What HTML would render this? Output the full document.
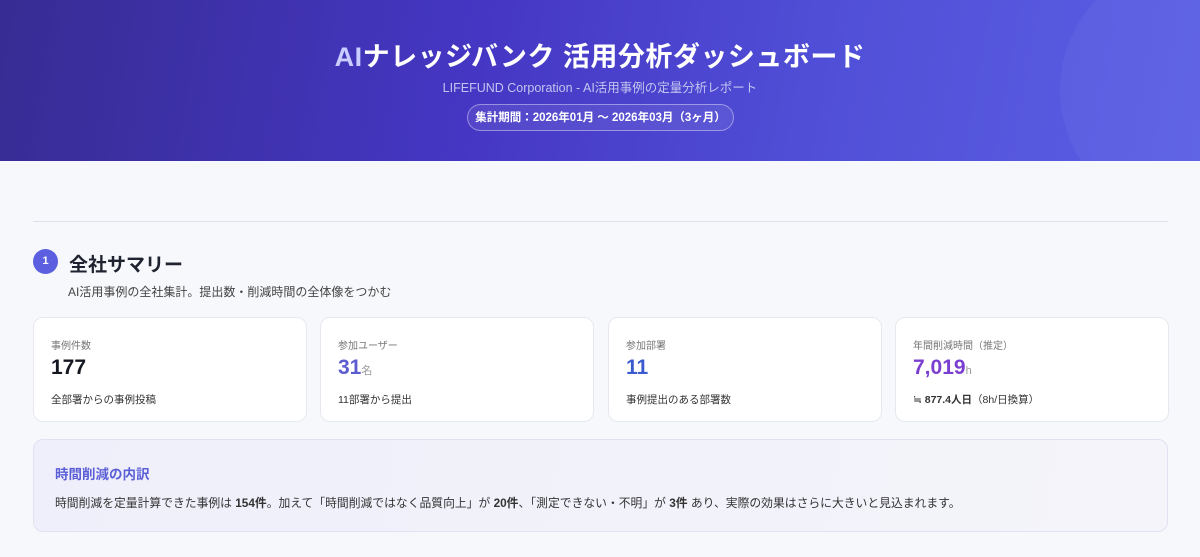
<!DOCTYPE html>
<html><head><meta charset="utf-8"><style>
*{margin:0;padding:0;box-sizing:border-box}
body{width:1200px;height:557px;overflow:hidden;background:#f7f8fb;font-family:"Liberation Sans","Noto Sans CJK JP",sans-serif;color:#1f2330;position:relative}
.hd{position:absolute;left:0;top:0;width:1200px;height:161px;background:linear-gradient(100deg,#372c93 0%,#4537c4 40%,#5150d8 70%,#5a5fe4 100%);overflow:hidden;text-align:center;color:#fff}
.hd .c{position:absolute;right:-120px;top:-40px;width:260px;height:260px;border-radius:50%;background:rgba(255,255,255,0.04)}
.hd h1{position:absolute;top:35px;left:0;right:0;font-size:27px;font-weight:bold;letter-spacing:0.5px}
.hd h1 span{color:#c9cdff}
.hd .s{position:absolute;top:77px;left:0;right:0;font-size:12.5px;color:#c3c5f0}
.hd .p{position:absolute;top:104px;left:467px;width:267px;height:27px;border:1px solid rgba(255,255,255,0.4);border-radius:14px;background:rgba(255,255,255,0.08);font-size:11.5px;font-weight:bold;line-height:27px}
.hr{position:absolute;left:33px;top:221px;width:1135px;height:1px;background:#dfe1e8}
.num{position:absolute;left:33px;top:249px;width:25px;height:25px;border-radius:50%;background:#5b5fe0;color:#fff;font-size:11px;font-weight:bold;text-align:center;line-height:25px}
.tt{position:absolute;left:69px;top:250px;font-size:19px;font-weight:bold}
.sub{position:absolute;left:68px;top:283px;font-size:12px;color:#444}
.card{position:absolute;top:317px;height:105px;width:274px;background:#fff;border:1px solid #e6e8ef;border-radius:10px;padding:0 17px}
.card .l{position:absolute;top:19px;font-size:10px;color:#777}
.card .v{position:absolute;top:38px;font-size:21px;font-weight:bold}
.card .v small{font-size:11px;color:#999;font-weight:normal}
.card .d{position:absolute;top:74px;font-size:10.5px;color:#333}
.box{position:absolute;left:33px;top:439px;width:1135px;height:93px;border:1px solid #e0e1f3;border-radius:10px;background:linear-gradient(100deg,#efeffb,#f4f4fa)}
.box h3{position:absolute;left:21px;top:23px;font-size:13.5px;color:#5b5fd6;font-weight:bold}
.box p{position:absolute;left:21px;top:54px;font-size:11.8px;color:#333}
</style></head><body>
<div class="hd"><div class="c"></div>
<h1><span>AI</span>ナレッジバンク 活用分析ダッシュボード</h1>
<div class="s">LIFEFUND Corporation - AI活用事例の定量分析レポート</div>
<div class="p">集計期間：2026年01月 〜 2026年03月（3ヶ月）</div>
</div>
<div class="hr"></div>
<div class="num">1</div>
<div class="tt">全社サマリー</div>
<div class="sub">AI活用事例の全社集計。提出数・削減時間の全体像をつかむ</div>
<div class="card" style="left:33px"><div class="l">事例件数</div><div class="v" style="color:#14171f">177</div><div class="d">全部署からの事例投稿</div></div>
<div class="card" style="left:320px"><div class="l">参加ユーザー</div><div class="v" style="color:#5a5ccf">31<small>名</small></div><div class="d">11部署から提出</div></div>
<div class="card" style="left:608px"><div class="l">参加部署</div><div class="v" style="color:#3a5bd0">11</div><div class="d">事例提出のある部署数</div></div>
<div class="card" style="left:895px"><div class="l">年間削減時間（推定）</div><div class="v" style="color:#7a3fd0">7,019<small>h</small></div><div class="d">≒ <b>877.4人日</b>（8h/日換算）</div></div>
<div class="box"><h3>時間削減の内訳</h3><p>時間削減を定量計算できた事例は <b>154件</b>。加えて「時間削減ではなく品質向上」が <b>20件</b>、「測定できない・不明」が <b>3件</b> あり、実際の効果はさらに大きいと見込まれます。</p></div>
</body></html>
